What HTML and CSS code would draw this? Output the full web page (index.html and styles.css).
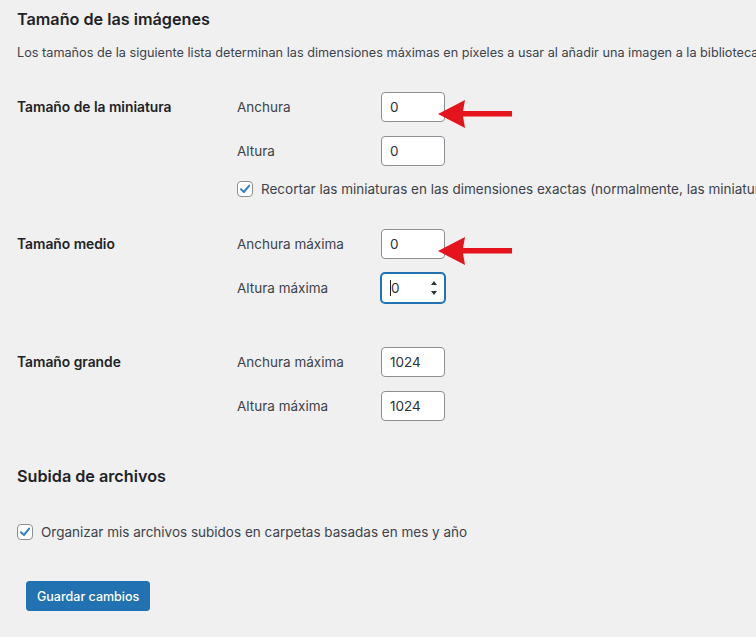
FILE: index.html
```html
<!DOCTYPE html>
<html>
<head>
    <link rel="stylesheet" href="styles.css">
</head>
<body>
    <form class="wrap">
        <h2 class="title">Tamaño de las imágenes</h2>
        <p class="intro">Los tamaños de la siguiente lista determinan las dimensiones máximas en píxeles a usar al añadir una imagen a la biblioteca de medios.</p>

        <div class="setting">
            <div class="setting-name">Tamaño de la miniatura</div>
            <div class="setting-fields">
                <div class="field">
                    <label class="field-label">Anchura</label>
                    <input class="num" type="text" value="0">
                    <svg class="arrow" width="74" height="28" viewBox="0 0 74 28"><polygon points="0,14 27,0 25,11 74,11 74,16.5 25,16.5 27,28" fill="#e5141c"/></svg>
                </div>
                <div class="field">
                    <label class="field-label">Altura</label>
                    <input class="num" type="text" value="0">
                </div>
                <label class="check-row">
                    <span class="checkbox"><svg width="14" height="14" viewBox="0 0 14 14"><path d="M3 7.2 L5.9 10 L11.2 3.6" fill="none" stroke="#3582c4" stroke-width="2" stroke-linecap="round" stroke-linejoin="round"/></svg></span>
                    Recortar las miniaturas en las dimensiones exactas (normalmente, las miniaturas son proporcionales)
                </label>
            </div>
        </div>

        <div class="setting setting-medium">
            <div class="setting-name">Tamaño medio</div>
            <div class="setting-fields">
                <div class="field">
                    <label class="field-label">Anchura máxima</label>
                    <input class="num" type="text" value="0">
                    <svg class="arrow" width="74" height="28" viewBox="0 0 74 28"><polygon points="0,14 27,0 25,11 74,11 74,16.5 25,16.5 27,28" fill="#e5141c"/></svg>
                </div>
                <div class="field">
                    <label class="field-label">Altura máxima</label>
                    <span class="num num-focus">
                        <span class="caret"></span>0
                        <svg class="spin" width="8" height="20" viewBox="0 0 8 20"><path d="M4 3 L7 7 L1 7 Z M4 17 L7 13 L1 13 Z" fill="#2c3338"/></svg>
                    </span>
                </div>
            </div>
        </div>

        <div class="setting">
            <div class="setting-name">Tamaño grande</div>
            <div class="setting-fields">
                <div class="field">
                    <label class="field-label">Anchura máxima</label>
                    <input class="num" type="text" value="1024">
                </div>
                <div class="field">
                    <label class="field-label">Altura máxima</label>
                    <input class="num" type="text" value="1024">
                </div>
            </div>
        </div>

        <h2 class="title title-uploads">Subida de archivos</h2>

        <label class="check-row check-uploads">
            <span class="checkbox"><svg width="14" height="14" viewBox="0 0 14 14"><path d="M3 7.2 L5.9 10 L11.2 3.6" fill="none" stroke="#3582c4" stroke-width="2" stroke-linecap="round" stroke-linejoin="round"/></svg></span>
            Organizar mis archivos subidos en carpetas basadas en mes y año
        </label>

        <div class="submit">
            <button type="button" class="button-primary">Guardar cambios</button>
        </div>
    </form>
</body>
</html>
```

FILE: styles.css
```css
html, body {
    margin: 0;
    padding: 0;
    background: #f0f0f1;
    overflow: hidden;
}

body {
    font-family: Inter, "Noto Sans", sans-serif;
    font-size: 13.5px;
    color: #3c434a;
}

.wrap {
    padding: 8px 0 0 17px;
    white-space: nowrap;
}

.title {
    font-size: 16.2px;
    font-weight: 600;
    line-height: 22px;
    color: #1d2327;
    margin: 0;
}

.intro {
    margin: 13px 0 29px;
    line-height: 20px;
    font-size: 12.7px;
}

.setting {
    display: flex;
    margin-bottom: 30px;
}

.setting-medium {
    margin-bottom: 44px;
}

.setting-name {
    width: 220px;
    flex-shrink: 0;
    line-height: 30px;
    font-size: 13.8px;
    font-weight: 600;
    color: #1d2327;
}

.setting-fields {
    display: flex;
    flex-direction: column;
    gap: 14px;
}

.field {
    position: relative;
    display: flex;
    align-items: center;
    height: 30px;
}

.field-label {
    width: 144px;
    margin-top: -1px;
}

.num {
    box-sizing: border-box;
    width: 64px;
    height: 30px;
    padding: 0 8px;
    border: 1px solid #8c8f94;
    border-radius: 4px;
    background: #fff;
    font-family: inherit;
    font-size: 13.5px;
    color: #2c3338;
    outline: none;
}

.num-focus {
    position: relative;
    display: flex;
    align-items: center;
    border-color: #2271b1;
    box-shadow: 0 0 0 1px #2271b1;
}

.caret {
    width: 1px;
    height: 16px;
    background: #1d2327;
}

.spin {
    position: absolute;
    right: 6px;
    top: 4px;
}

.arrow {
    position: absolute;
    left: 201px;
    top: 8px;
}

.check-row {
    display: flex;
    align-items: center;
    gap: 8px;
    line-height: 20px;
    margin-top: -1px;
}

.checkbox {
    box-sizing: border-box;
    width: 16px;
    height: 16px;
    border: 1px solid #8c8f94;
    border-radius: 4px;
    background: #fff;
    display: flex;
    align-items: center;
    justify-content: center;
}

.title-uploads {
    margin-top: 44px;
}

.check-uploads {
    margin-top: 35px;
}

.submit {
    margin-top: 39px;
    padding-left: 9px;
}

.button-primary {
    height: 30px;
    padding: 0 10px;
    background: #2271b1;
    border: 1px solid #2271b1;
    border-radius: 3px;
    color: #fff;
    font-family: inherit;
    font-size: 12.5px;
    font-weight: 500;
    cursor: pointer;
}
```
